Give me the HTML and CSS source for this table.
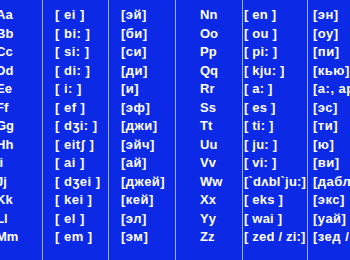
FILE: index.html
```html
<!DOCTYPE html>
<html>
<head>
<meta charset="utf-8">
<link rel="stylesheet" href="styles.css">
</head>
<body>
<div class="table">
  <div class="col c1">
    <div>Aa</div><div>Bb</div><div>Cc</div><div>Dd</div><div>Ee</div><div>Ff</div><div>Gg</div><div>Hh</div><div>Ii</div><div>Jj</div><div>Kk</div><div>Ll</div><div>Mm</div>
  </div>
  <div class="col c2">
    <div>[ ei ]</div><div>[ bi: ]</div><div>[ si: ]</div><div>[ di: ]</div><div>[ i: ]</div><div>[ ef ]</div><div>[ dʒi: ]</div><div>[ eitʃ ]</div><div>[ ai ]</div><div>[ dʒei ]</div><div>[ kei ]</div><div>[ el ]</div><div>[ em ]</div>
  </div>
  <div class="col c3">
    <div>[эй]</div><div>[би]</div><div>[си]</div><div>[ди]</div><div>[и]</div><div>[эф]</div><div>[джи]</div><div>[эйч]</div><div>[ай]</div><div>[джей]</div><div>[кей]</div><div>[эл]</div><div>[эм]</div>
  </div>
  <div class="col c4">
    <div>Nn</div><div>Oo</div><div>Pp</div><div>Qq</div><div>Rr</div><div>Ss</div><div>Tt</div><div>Uu</div><div>Vv</div><div>Ww</div><div>Xx</div><div>Yy</div><div>Zz</div>
  </div>
  <div class="col c5">
    <div>[ en ]</div><div>[ ou ]</div><div>[ pi: ]</div><div>[ kju: ]</div><div>[ a: ]</div><div>[ es ]</div><div>[ ti: ]</div><div>[ ju: ]</div><div>[ vi: ]</div><div>[`dʌbl`ju:]</div><div>[ eks ]</div><div>[ wai ]</div><div>[ zed / zi:]</div>
  </div>
  <div class="col c6">
    <div>[эн]</div><div>[оу]</div><div>[пи]</div><div>[кью]</div><div>[a:, ар]</div><div>[эс]</div><div>[ти]</div><div>[ю]</div><div>[ви]</div><div>[даблью]</div><div>[экс]</div><div>[уай]</div><div>[зед / зи]</div>
  </div>
</div>
</body>
</html>
```
FILE: styles.css
```css
html, body {
  margin: 0;
  padding: 0;
  width: 350px;
  height: 260px;
  overflow: hidden;
  background: #0c2ae6;
}
.table {
  display: grid;
  grid-template-columns: 71px 66px 67px 67px 65px 120px;
  margin-left: -29px;
  height: 260px;
  font-family: "Liberation Sans", Arial, sans-serif;
  font-weight: bold;
  font-size: 13px;
  color: #ffffff;
}
.col {
  padding-top: 6px;
  white-space: nowrap;
  overflow: hidden;
}
.col div {
  height: 18.5px;
  line-height: 18.5px;
}
.c2, .c3, .c6 {
  letter-spacing: 0.5px;
}
.c5 {
  letter-spacing: 0.2px;
}
.c2, .c3, .c4, .c5, .c6 {
  border-left: 1px solid rgba(200, 215, 255, 0.75);
}
.c1 { padding-left: 25px; }
.c2 { padding-left: 12px; }
.c3 { padding-left: 12px; }
.c4 { padding-left: 24px; }
.c5 { padding-left: 1px; }
.c6 { padding-left: 5px; }
```
